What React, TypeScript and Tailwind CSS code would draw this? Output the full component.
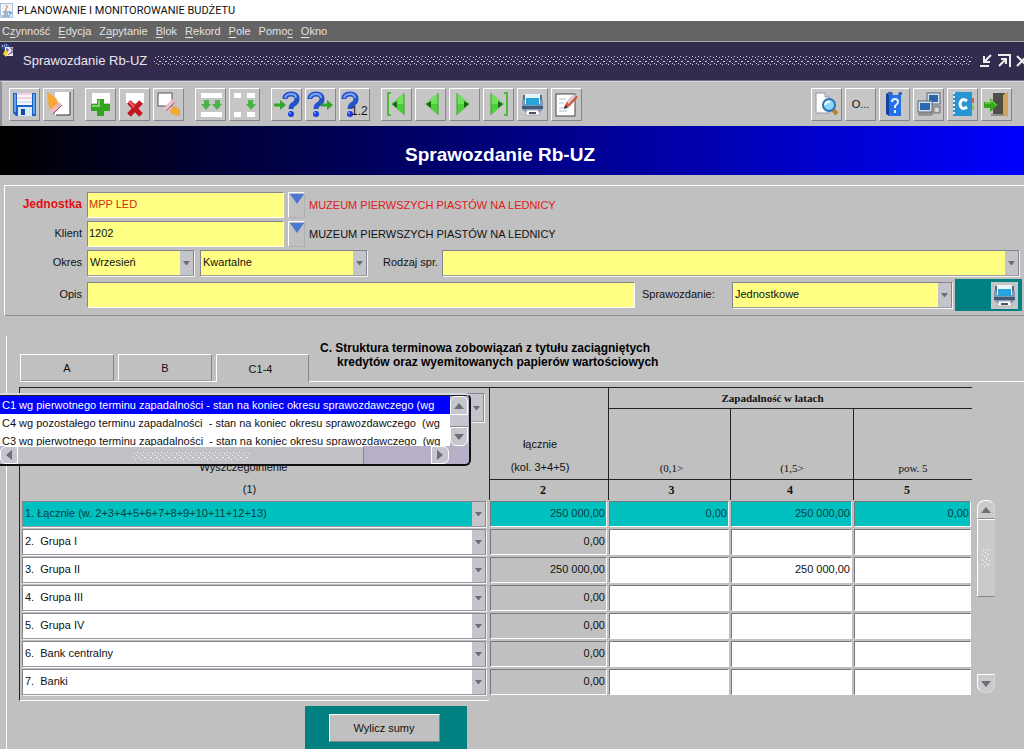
import React, { useState } from 'react';
import clsx from 'clsx';

const menu = [
  ['C', 'z', 'ynność'],
  ['', 'E', 'dycja'],
  ['Z', 'a', 'pytanie'],
  ['', 'B', 'lok'],
  ['', 'R', 'ekord'],
  ['', 'P', 'ole'],
  ['Pomo', 'c', ''],
  ['', 'O', 'kno'],
];

const rows = [
  { name: '1. Łącznie (w. 2+3+4+5+6+7+8+9+10+11+12+13)', values: ['250 000,00', '0,00', '250 000,00', '0,00'], total: true },
  { name: '2.\u00a0 Grupa I', values: ['0,00', '', '', ''] },
  { name: '3.\u00a0 Grupa II', values: ['250 000,00', '', '250 000,00', ''] },
  { name: '4.\u00a0 Grupa III', values: ['0,00', '', '', ''] },
  { name: '5.\u00a0 Grupa IV', values: ['0,00', '', '', ''] },
  { name: '6.\u00a0 Bank centralny', values: ['0,00', '', '', ''] },
  { name: '7.\u00a0 Banki', values: ['0,00', '', '', ''] },
];

const options = [
  'C1 wg pierwotnego terminu zapadalności - stan na koniec okresu sprawozdawczego (wg',
  'C4 wg pozostałego terminu zapadalności  - stan na koniec okresu sprawozdawczego  (wg',
  'C3 wg pierwotnego terminu zapadalności  - stan na koniec okresu sprawozdawczego  (wg',
];

const Icon = ({ children }: { children: React.ReactNode }) => (
  <svg width="27" height="28" viewBox="0 0 27 28" className="shrink-0" aria-hidden="true">{children}</svg>
);

const Question = ({ x = 0 }: { x?: number }) => (
  <g transform={`translate(${x} 0)`}>
    <path d="M3 9 Q3 4 9 4 Q15 4 15 9 Q15 12 12 14 Q9 15 9 19" fill="none" stroke="#2450c8" strokeWidth="5" />
    <path d="M3 8 Q4 4 9 4 Q14 4 14 8" fill="none" stroke="#7ba2f4" strokeWidth="2" />
    <circle cx="9" cy="24" r="3" fill="#1c3ee0" />
    <circle cx="8" cy="23" r="1" fill="#7ea0f4" />
  </g>
);

const greenArrow = 'M0 -1.5 H6 V-5 L12 0 L6 5 V1.5 H0 Z';

const SaveIcon = () => (
  <Icon>
    <path d="M2 3 H25 V26 H5 L2 23 Z" fill="#1c62c4" />
    <path d="M3 4 H5 V22 H3Z M22 4 H24 V24 H22Z" fill="#5aa4ec" />
    <rect x="6" y="3" width="15" height="12" fill="#fbf4fb" />
    <path d="M6 4 H21 M6 8 H21" stroke="#efa9cf" />
    <path d="M6 12 H21" stroke="#b7d0f2" />
    <rect x="7" y="17" width="14" height="9" fill="#d9e8fa" />
    <rect x="10" y="19" width="4" height="6" fill="#164a9c" />
  </Icon>
);

const ClearIcon = () => (
  <Icon>
    <rect x="10" y="2" width="15" height="23" fill="#fff" />
    <path d="M25 2 V25 H11" fill="none" stroke="#333" />
    <path d="M2 2 L11 8 L14 14 L7 20 L4 18 Z" fill="#f5a93a" />
    <path d="M5 20 L14 12 L17 15 L8 24 Z" fill="#eab7bd" />
    <path d="M8 24 L17 15" stroke="#875058" />
  </Icon>
);

const AddIcon = () => (
  <Icon>
    <rect x="5" y="3" width="18" height="10" fill="#fff" />
    <path d="M10 9 H17 V14 H23 V21 H17 V26 H10 V21 H4 V14 H10 Z" fill="#32a51e" />
    <path d="M12 10 V16 H5" fill="none" stroke="#82d46a" strokeWidth="2" />
  </Icon>
);

const DeleteIcon = () => (
  <Icon>
    <rect x="5" y="3" width="18" height="10" fill="#fff" />
    <path d="M8 12 L20 25 M20 12 L8 25" stroke="#c3161e" strokeWidth="5" />
    <path d="M8 11 L13 17" stroke="#ea6060" strokeWidth="2" />
  </Icon>
);

const EraseIcon = () => (
  <Icon>
    <rect x="3" y="3" width="14" height="13" fill="#fff" stroke="#555" />
    <path d="M8 19 L17 9 L20 12 L11 21 Z" fill="#f0bcc6" />
    <path d="M11 21 L20 12" stroke="#9c5b66" />
    <path d="M15 20 L20 16 L25 20 V26 L16 24 Z" fill="#f5a730" />
  </Icon>
);

const RowsIcon = () => (
  <Icon>
    <rect x="4" y="3" width="21" height="5" fill="#fff" />
    <rect x="4" y="22" width="21" height="5" fill="#fff" />
    <path d="M7 10 H12 V14 H14 L9 20 L4 14 H7Z M18 10 H23 V14 H25 L20 20 L15 14 H18Z" fill="#4cb24a" />
  </Icon>
);

const CellsIcon = () => (
  <Icon>
    <path d="M3 3 H10 V8 H3Z M16 3 H24 V8 H16Z M3 22 H10 V27 H3Z M16 22 H24 V27 H16Z" fill="#fff" />
    <path d="M17 10 H22 V14 H25 L20 20 L15 14 H17Z" fill="#4cb24a" />
  </Icon>
);

const EnterQueryIcon = () => (
  <Icon>
    <Question x={9} />
    <path transform="translate(1 15)" d={greenArrow} fill="#30a529" />
  </Icon>
);

const RunQueryIcon = () => (
  <Icon>
    <Question />
    <path transform="translate(14 15)" d={greenArrow} fill="#30a529" />
  </Icon>
);

const CountIcon = () => (
  <Icon>
    <Question />
    <text x="10" y="25" fontFamily="Liberation Sans, sans-serif" fontSize="12" fill="#111">1.2</text>
  </Icon>
);

// direction arrows of the record navigator, `bar` adds the first/last line
const NavIcon = ({ back, bar }: { back?: boolean; bar?: boolean }) => (
  <Icon>
    <g transform={back ? undefined : 'translate(27 0) scale(-1 1)'}>
      {bar && <path d="M8 3 H5 V25 H8" fill="none" stroke="#4eba3c" strokeWidth="2" />}
      <path d="M21 3 V25 L8 14 Z" fill="#4bd039" />
      <path d="M21 3 L8 14 H21Z" fill="#6ee35a" />
      <path d="M14 11 L9 14 L14 18Z" fill="#23611f" />
      <path d="M21 3 V25" stroke="#3c9c30" />
    </g>
  </Icon>
);

const PrinterIcon = () => (
  <Icon>
    <path d="M3 10 H24 V19 L21 22 H6 L3 19Z" fill="#7f99b4" />
    <path d="M3 16 H24 V19 H3Z" fill="#425b78" />
    <path d="M6 4 H21 V14 H6Z" fill="#e8f5fc" />
    <path d="M7 8 H20 V15 H7Z" fill="#25a5dc" />
    <path d="M5 5 V10 M22 5 V10" stroke="#53718e" strokeWidth="2" />
    <path d="M8 20 H19 L21 25 H6Z" fill="#fff" stroke="#aab" />
    <path d="M10 23 H17" stroke="#4c5568" strokeWidth="2" />
  </Icon>
);

const EditIcon = () => (
  <Icon>
    <rect x="3" y="4" width="19" height="22" fill="#fff" stroke="#444" />
    <path d="M6 9 H13 M6 13 H11 M6 18 H16 M6 21 H14" stroke="#a9bdd2" />
    <path d="M11 19 L13 13 L21 4 L25 7 L17 16Z" fill="#d65742" />
    <path d="M15 13 L22 5" stroke="#cfe0f0" strokeWidth="2" />
    <path d="M11 19 L12 15 L15 17Z" fill="#333" />
  </Icon>
);

const PreviewIcon = () => (
  <Icon>
    <path d="M3 3 H12 L16 7 V23 H3Z" fill="#fff" stroke="#8c98a4" />
    <path d="M12 3 V7 H16" fill="#d5dce4" stroke="#8c98a4" />
    <path d="M20 20 L24 24" stroke="#b98423" strokeWidth="4" />
    <circle cx="16" cy="15" r="6" fill="#8bd8f8" stroke="#2b74b8" strokeWidth="2" />
    <path d="M12 15 Q13 11 17 12" fill="none" stroke="#fff" strokeWidth="2" />
  </Icon>
);

const HelpIcon = () => (
  <Icon>
    <path d="M5 4 L8 2 V26 L5 24Z" fill="#123f9c" />
    <path d="M8 5 H20 V26 H8Z" fill="#2470e6" />
    <path d="M7 2 H11 L12 5 H17 L18 2 H21 V5 H7Z" fill="#3c64bb" />
    <path d="M11 12 Q11 9 14 9 Q17 9 17 12 Q17 14 14 16 V18 M14 20 V23" fill="none" stroke="#e5f0ff" strokeWidth="2" />
  </Icon>
);

const ComputersIcon = () => (
  <Icon>
    <rect x="12" y="3" width="13" height="11" fill="#dbe3ea" stroke="#536478" />
    <rect x="14" y="5" width="9" height="7" fill="#2b64ac" />
    <rect x="3" y="11" width="14" height="11" fill="#dbe3ea" stroke="#536478" />
    <rect x="5" y="13" width="10" height="7" fill="#2d68b2" />
    <path d="M18 16 H25 V23 H18Z M4 23 H17 V25 H4Z" fill="#aaa" stroke="#777" />
    <circle cx="22" cy="20" r="2" fill="#ddd" />
  </Icon>
);

const NotesIcon = () => (
  <Icon>
    <rect x="4" y="2" width="19" height="24" fill="#2795d2" />
    <path d="M5 2 V26" stroke="#d7edf7" strokeWidth="2" strokeDasharray="2 2" />
    <path d="M23 8 H25 V13 H23Z" fill="#e05c58" />
    <path d="M23 15 H25 V20 H23Z" fill="#93c747" />
    <path d="M18 11 Q14 8 12 11 Q10 14 12 17 Q14 20 18 17" fill="none" stroke="#fff" strokeWidth="3" />
  </Icon>
);

const ExitIcon = () => (
  <Icon>
    <path d="M10 3 H22 V25 H10Z" fill="#4e4d48" />
    <path d="M20 5 L25 2 V27 L20 25Z" fill="#d2a35e" />
    <path d="M8 25 H21" stroke="#8c8c88" strokeWidth="2" />
    <path d="M1 12 H7 V8 L15 15 L7 22 V18 H1Z" fill="#36a820" />
    <path d="M2 13 H8 V10 L13 15" fill="none" stroke="#7cdc5c" />
  </Icon>
);

const toolGroups = [
  [['Zapisz', <SaveIcon />], ['Wyczyść', <ClearIcon />]],
  [['Dodaj rekord', <AddIcon />], ['Usuń rekord', <DeleteIcon />], ['Wyczyść rekord', <EraseIcon />]],
  [['Powiel rekord', <RowsIcon />], ['Powiel pole', <CellsIcon />]],
  [['Wprowadź zapytanie', <EnterQueryIcon />], ['Wykonaj zapytanie', <RunQueryIcon />], ['Policz', <CountIcon />]],
  [
    ['Pierwszy', <NavIcon back bar />],
    ['Poprzedni', <NavIcon back />],
    ['Następny', <NavIcon />],
    ['Ostatni', <NavIcon bar />],
    ['Drukuj', <PrinterIcon />],
    ['Edytuj', <EditIcon />],
  ],
] as [string, React.ReactNode][][];

const rightTools = [
  ['Podgląd', <PreviewIcon />],
  ['Opcje', <span className="text-[11px]">O...</span>],
  ['Pomoc', <HelpIcon />],
  ['Stanowiska', <ComputersIcon />],
  ['Notes', <NotesIcon />],
  ['Wyjście', <ExitIcon />],
] as [string, React.ReactNode][];

const ToolButton = ({ label, children }: { label: string; children: React.ReactNode }) => (
  <button
    type="button"
    aria-label={label}
    className="flex h-[33px] w-[31px] items-center justify-center border border-t-white border-l-white border-r-[#85858d] border-b-[#85858d] bg-[#c6c6c6]"
  >
    {children}
  </button>
);

// dotted grip used by the title bar and the scrollbars
const Grip = ({ id, className, color }: { id: string; className: string; color: string }) => (
  <svg className={className} aria-hidden="true">
    <pattern id={id} width="6" height="10" patternUnits="userSpaceOnUse">
      <path d="M4 0h1v1h-1zM1 1h1v1h-1zM3 3h1v1h-1zM0 5h1v1h-1zM5 5h1v1h-1zM2 7h1v1h-1zM4 8h1v1h-1z" fill={color} />
    </pattern>
    <rect width="100%" height="100%" fill={`url(#${id})`} />
  </svg>
);

const Triangle = ({ d, color = '#6e6e78' }: { d: string; color?: string }) => (
  <svg width="12" height="12" viewBox="0 0 12 12" aria-hidden="true"><path d={d} fill={color} /></svg>
);

const UP = 'M1 9 L6 3 L11 9Z';
const DOWN = 'M1 3 L11 3 L6 9Z';
const LEFT = 'M9 1 V11 L3 6Z';
const RIGHT = 'M3 1 V11 L9 6Z';

type ComboProps = {
  id?: string;
  label?: string;
  value: string;
  className?: string;
  tone?: string;
};

const Combo = ({ id, label, value, className, tone = 'bg-[#ffff84]' }: ComboProps) => (
  <div className={clsx('relative h-[26px] border border-[#85858f] border-b-[#9c9ca4] shadow-[1px_1px_0_#f4f4f4]', className)}>
    <select id={id} aria-label={label} className={clsx('block h-full w-full appearance-none pr-4 pb-[2px] pl-[2px] outline-none', tone)}>
      <option>{value}</option>
    </select>
    <span className="pointer-events-none absolute inset-y-0 right-0 flex w-[13px] items-center justify-center bg-[#c4c4cb]">
      <svg width="7" height="4" viewBox="0 0 7 4" aria-hidden="true"><path d="M0 0H7L4 4H3Z" fill="#6e6e78" /></svg>
    </span>
  </div>
);

const fieldClass =
  'h-[26px] border border-t-[#85858d] border-l-[#85858d] border-r-white border-b-white bg-[#ffff84] px-px pb-[2px] outline-none';

const LovButton = ({ label }: { label: string }) => (
  <button type="button" aria-label={label} className="ml-1 flex h-[26px] w-[17px] justify-center border border-t-white border-l-white border-r-[#b0b0b4] border-b-[#b0b0b4]">
    <svg width="14" height="11" viewBox="0 0 14 11" aria-hidden="true"><path d="M0 1H14L7 11Z" fill="#4a78d0" /></svg>
  </button>
);

const labelClass = 'w-[78px] shrink-0 pr-px pb-[2px] text-right';

export default function App() {
  const [active, setActive] = useState(0);

  return (
    <div className="flex min-h-screen flex-col overflow-hidden bg-[#c0c0c0] font-['Liberation_Sans',Arial,sans-serif] text-[11px] leading-[14px] text-[#111]">
      <header className="flex h-[21px] items-center gap-1 bg-white font-[Roboto,sans-serif] text-[11px]">
        <svg width="13" height="15" viewBox="0 0 13 15" aria-hidden="true">
          <rect width="13" height="15" fill="#a9c3dc" />
          <rect x="1" y="1" width="11" height="13" fill="#eef3f7" />
          <path d="M6 2 Q9 4 6 6 Q5 7 6 8" fill="none" stroke="#dd762f" />
          <path d="M3 9 H9 M4 11 H8 M2 13 H10 M9 9 H11 V11 H9" fill="none" stroke="#4a77a8" />
        </svg>
        <h1>PLANOWANIE I MONITOROWANIE BUDŻETU</h1>
      </header>

      <nav className="flex h-[21px] items-center gap-2 border-b border-[#aaa] bg-[#646464] pl-[2px] text-[#e2e2e2]">
        {menu.map(([before, key, after]) => (
          <button type="button" key={before + key + after}>
            {before}<u className="underline-offset-2">{key}</u>{after}
          </button>
        ))}
      </nav>

      <div className="flex h-[39px] items-center border-b border-[#777289] bg-[#342c4e] text-white">
        <svg width="14" height="16" viewBox="0 0 14 16" className="self-start" aria-hidden="true">
          <path d="M1 3 L6 1 L10 4 L5 8 L1 6Z" fill="#2f4fae" />
          <path d="M2 4 H5 M6 3 H8" stroke="#fff" strokeDasharray="1 1" />
          <rect x="5" y="5" width="8" height="9" fill="#f3ecee" />
          <path d="M6 7 H8 V9 H6 M10 6 H12 V11 H10" fill="none" stroke="#41408c" />
          <path d="M5 8 L8 10 L6 15 L3 12Z" fill="#f3d23a" />
          <path d="M8 13 L10 11" stroke="#cf3c34" />
        </svg>
        <h2 className="ml-[9px] mr-[7px] text-[13px] text-[#e8e6f0]">Sprawozdanie Rb-UZ</h2>
        <Grip id="grip-title" className="h-[10px] min-w-0 flex-1" color="#d4d2e0" />
        <div className="ml-[7px] flex gap-1">
          <button type="button" aria-label="Minimalizuj">
            <svg width="14" height="14" viewBox="0 0 14 14" aria-hidden="true">
              <path d="M12 1 L6 7 M5 2 V8 H11 M1 12 H10" fill="none" stroke="#eee" strokeWidth="2" />
            </svg>
          </button>
          <button type="button" aria-label="Maksymalizuj">
            <svg width="14" height="14" viewBox="0 0 14 14" aria-hidden="true">
              <path d="M2 12 L8 6 M4 5 H9 V10 M1 1 H13 V13" fill="none" stroke="#eee" strokeWidth="2" />
            </svg>
          </button>
          <button type="button" aria-label="Zamknij" className="w-[9px] overflow-hidden">
            <svg width="14" height="14" viewBox="0 0 14 14" aria-hidden="true">
              <path d="M2 2 L12 12 M12 2 L2 12" stroke="#eee" strokeWidth="2" />
            </svg>
          </button>
        </div>
      </div>

      <div className="flex h-[45px] items-center justify-between border-t border-l-2 border-[#9090a0] border-t-[#d8d8d8] pl-[7px] pr-3">
        <div className="flex gap-[11px]">
          {toolGroups.map((group, i) => (
            <div key={i} className="flex gap-[3px]">
              {group.map(([label, icon]) => <ToolButton key={label} label={label}>{icon}</ToolButton>)}
            </div>
          ))}
        </div>
        <div className="flex gap-[3px]">
          {rightTools.map(([label, icon]) => <ToolButton key={label} label={label}>{icon}</ToolButton>)}
        </div>
      </div>

      <div className="flex h-[49px] items-center justify-center bg-linear-to-r/srgb from-black to-[#0000ff] pt-3 pr-6">
        <h2 className="pb-1 text-[19px] font-bold text-white">Sprawozdanie Rb-UZ</h2>
      </div>

      <form className="mt-[10px] ml-1 flex h-[131px] flex-col gap-[3px] border-t border-b border-l border-t-white border-b-[#8c8c94] border-l-white pt-[6px]">
        <div className="flex items-center">
          <label htmlFor="jednostka" className={clsx(labelClass, 'text-[12px] font-bold text-[#e01010]')}>Jednostka</label>
          <input id="jednostka" defaultValue="MPP LED" className={clsx(fieldClass, 'ml-1 w-[197px] text-[#c8300c]')} />
          <LovButton label="Lista jednostek" />
          <span className="ml-1 pb-px text-[#e01818]">MUZEUM PIERWSZYCH PIASTÓW NA LEDNICY</span>
        </div>
        <div className="flex items-center">
          <label htmlFor="klient" className={labelClass}>Klient</label>
          <input id="klient" defaultValue="1202" className={clsx(fieldClass, 'ml-1 w-[197px]')} />
          <LovButton label="Lista klientów" />
          <span className="ml-1 pb-px">MUZEUM PIERWSZYCH PIASTÓW NA LEDNICY</span>
        </div>
        <div className="flex items-center">
          <label htmlFor="okres" className={labelClass}>Okres</label>
          <Combo id="okres" value="Wrzesień" className="ml-1 w-[107px]" />
          <Combo label="Rodzaj okresu" value="Kwartalne" className="ml-[6px] w-[167px]" />
          <label htmlFor="rodzaj" className="ml-4 mr-1 pb-[2px]">Rodzaj spr.</label>
          <Combo id="rodzaj" value="" className="mr-[5px] flex-1" />
        </div>
        <div className="flex items-center">
          <label htmlFor="opis" className={clsx(labelClass, 'pr-1')}>Opis</label>
          <input id="opis" className={clsx(fieldClass, 'ml-1 min-w-0 flex-1')} />
          <label htmlFor="sprawozdanie" className="ml-[7px] w-[90px] pb-[2px]">Sprawozdanie:</label>
          <Combo id="sprawozdanie" value="Jednostkowe" className="w-[220px]" />
          <div className="ml-[3px] mr-[2px] flex h-8 w-[67px] items-center justify-end bg-[#008080] pr-1">
            <button type="button" aria-label="Drukuj sprawozdanie" className="flex h-[27px] w-[27px] items-center justify-center bg-[#c6c6c6]">
              <PrinterIcon />
            </button>
          </div>
        </div>
      </form>

      <main className="mt-5 ml-[6px] flex flex-1 flex-col border-l border-white">
        <div className="flex h-[46px] items-end pl-[13px]">
          <div role="tablist" className="flex items-end">
            <div className="flex gap-1 border-b border-white pr-1">
              {['A', 'B'].map((t) => (
                <button
                  key={t}
                  type="button"
                  role="tab"
                  aria-selected={false}
                  className="h-[27px] w-[94px] border border-t-white border-l-white border-r-[#85858d] border-b-[#a0a0a4]"
                >
                  {t}
                </button>
              ))}
            </div>
            <button type="button" role="tab" aria-selected className="h-7 w-[93px] border border-b-0 border-t-white border-l-white border-r-[#85858d] pr-1">
              C1-4
            </button>
          </div>
          <div className="h-full flex-1 border-b border-white pt-[5px] pl-[11px] text-[12px] font-bold text-black">
            <p>C. Struktura terminowa zobowiązań z tytułu zaciągniętych</p>
            <p className="pl-[17px]">kredytów oraz wyemitowanych papierów wartościowych</p>
          </div>
        </div>

        <div className="mt-[5px] flex gap-[5px] pr-[29px] pl-[12px]">
          <table className="min-w-0 flex-1 table-fixed border-separate border-spacing-0">
            <colgroup>
              <col />
              <col className="w-[119px]" />
              <col className="w-[122px]" />
              <col className="w-[123px]" />
              <col className="w-[119px]" />
            </colgroup>
            <thead className="font-normal">
              <tr className="h-[22px]">
                <th rowSpan={3} className="relative border-t border-l border-[#222] p-0 pl-[2px] align-top font-normal">
                  <Combo label="Część sprawozdania" value={options[active]} tone="bg-white" className="mt-[5px] mr-[5px] h-[29px]" />
                  <p className="mt-[38px] pr-6">Wyszczególnienie</p>
                  <p className="mt-2 pr-3 pb-1">(1)</p>
                  <div className="absolute top-[5px] -left-5 w-[471px] overflow-hidden rounded-r-md border-t-2 border-r-2 border-b-2 border-t-[#d8d8e2] border-r-[#111] border-b-[#111] bg-[#b8b0c8] text-left">
                    <div className="flex h-[51px] border-t border-[#222]">
                      <ul role="listbox" aria-label="Części sprawozdania" className="w-[450px] overflow-hidden bg-white">
                        {options.map((o, i) => (
                          <li
                            key={o}
                            role="option"
                            aria-selected={i === active}
                            onClick={() => setActive(i)}
                            className={clsx('h-[18px] overflow-hidden pl-[2px] leading-[18px] whitespace-pre', i === active && 'bg-[#0000ff] text-white')}
                          >
                            {o}
                          </li>
                        ))}
                      </ul>
                      <div className="flex w-[18px] flex-col justify-between">
                        <button type="button" aria-label="W górę" className="flex h-[19px] items-center justify-center rounded-t-md border border-white bg-[#c6c6ce]"><Triangle d={UP} /></button>
                        <div className="flex-1 border-b border-[#85858f] bg-[#c6c6ce]" />
                        <button type="button" aria-label="W dół" className="flex h-[19px] items-center justify-center rounded-b-md border border-white bg-[#c6c6ce]"><Triangle d={DOWN} /></button>
                      </div>
                    </div>
                    <div className="flex h-[18px]">
                      <button type="button" aria-label="W lewo" className="flex w-[18px] items-center justify-center rounded-l-md border border-white bg-[#c6c6ce]"><Triangle d={LEFT} /></button>
                      <div className="flex w-[346px] items-center justify-center border-t border-r border-t-white border-r-[#85858f] bg-[#c2c2c6]">
                        <Grip id="grip-list" className="h-2 w-[116px]" color="#f4f4f4" />
                      </div>
                      <div className="w-[67px]" />
                      <button type="button" aria-label="W prawo" className="flex w-[18px] items-center justify-center rounded-r-md border border-white bg-[#c6c6ce]"><Triangle d={RIGHT} /></button>
                    </div>
                  </div>
                </th>
                <th rowSpan={2} className="border-t border-b border-l border-[#222] p-0 pr-[18px] align-bottom leading-[23px] font-normal">
                  łącznie<br />(kol. 3+4+5)
                </th>
                <th colSpan={3} className="border-t border-b border-l border-[#222] p-0 pr-9 font-['Liberation_Serif',serif]">
                  Zapadalność w latach
                </th>
              </tr>
              <tr className="h-[71px] align-bottom font-['Liberation_Serif',serif]">
                <th className="border-b border-l border-[#222] p-0 pt-1 pb-1 pl-1 font-normal">{'(0,1>'}</th>
                <th className="border-b border-l border-[#222] p-0 pt-1 pb-1 font-normal">{'(1,5>'}</th>
                <th className="border-b border-l border-[#222] p-0 pb-1 font-normal">pow. 5</th>
              </tr>
              <tr className="h-5 font-['Liberation_Serif',serif] text-[12px]">
                <th className="border-l border-[#222] p-0 pr-3">2</th>
                <th className="border-l border-[#222] p-0 pl-1">3</th>
                <th className="border-l border-[#222] p-0 pr-1">4</th>
                <th className="border-l border-[#222] p-0 pr-3">5</th>
              </tr>
            </thead>
            <tbody>
              {rows.map((row) => (
                <tr key={row.name} className="h-7">
                  <td className="border-l border-[#222] p-0 pr-[3px] pl-[2px]">
                    <Combo label={row.name} value={row.name} tone={row.total ? 'bg-[#00c0c0] text-[#084040]' : 'bg-white'} />
                  </td>
                  {row.values.map((v, i) => (
                    <td key={i} className="p-0 pr-px pl-px">
                      <input
                        aria-label={`${row.name} kol. ${i + 2}`}
                        defaultValue={v}
                        className={clsx(
                          'block h-[26px] w-full border border-t-[#77777f] border-l-[#77777f] border-r-white border-b-white pr-px pb-[2px] text-right outline-none',
                          row.total ? 'bg-[#00c0c0] text-[#084040]' : i === 0 ? 'bg-[#c0c0c0]' : 'bg-white',
                        )}
                      />
                    </td>
                  ))}
                </tr>
              ))}
              <tr className="h-[5px]" aria-hidden="true">
                <td className="border-b border-l border-b-white border-l-[#222] p-0" />
              </tr>
            </tbody>
          </table>

          <div className="mt-[113px] mb-2 flex w-[18px] flex-col">
            <button type="button" aria-label="Poprzednie wiersze" className="flex h-[19px] items-center justify-center rounded-t-lg border border-t-white border-l-white border-r-[#d8d8d8] border-b-[#85858d] bg-[#cacaca]"><Triangle d={UP} /></button>
            <div className="flex h-[78px] items-center justify-center border border-t-white border-l-white border-r-[#c8c8c8] border-b-[#85858d] bg-[#cacaca]">
              <Grip id="grip-rows" className="h-[18px] w-2" color="#f8f8f8" />
            </div>
            <div className="flex-1" />
            <button type="button" aria-label="Następne wiersze" className="flex h-[19px] items-center justify-center rounded-b-lg border border-t-white border-l-white border-r-[#d8d8d8] border-b-[#d8d8d8] bg-[#cacaca]"><Triangle d={DOWN} /></button>
          </div>
        </div>

        <div className="mt-[5px] ml-[298px] flex h-11 w-[162px] items-center justify-center bg-[#008080] pr-1">
          <button type="button" className="h-7 w-[111px] border border-t-white border-l-white border-r-[#85858d] border-b-[#85858d] bg-[#c0c0c0]">
            Wylicz sumy
          </button>
        </div>
      </main>
    </div>
  );
}
